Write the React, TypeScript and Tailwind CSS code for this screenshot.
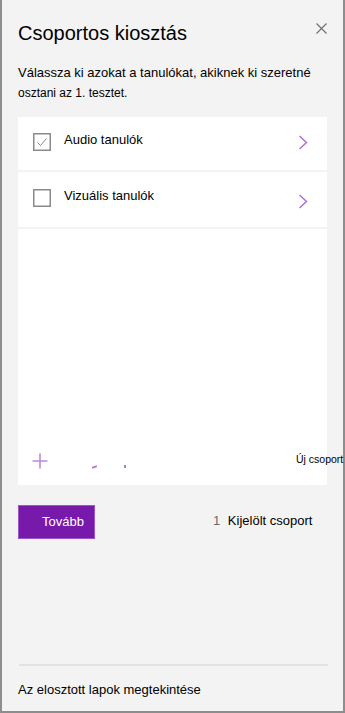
function Checkbox({ checked }: { checked?: boolean }) {
  return (
    <svg className="mt-[2px] shrink-0" width="18" height="18" viewBox="0 0 18 18" fill="none">
      <rect x="0.75" y="0.75" width="16.5" height="16.5" stroke="#8a8a8a" strokeWidth="1.5" />
      {checked && <polyline points="4.5,9.5 7.5,12.5 13.5,5.5" stroke="#8a8a8a" strokeWidth="1" />}
    </svg>
  );
}

function Chevron({ className }: { className: string }) {
  return (
    <svg className={className} width="10" height="15" viewBox="0 0 10 15" fill="none">
      <polyline points="1.5,1 8.5,7.5 1.5,14" stroke="#a96bd6" strokeWidth="1.4" />
    </svg>
  );
}

export default function App() {
  return (
    <div
      className="w-[345px] h-[713px] flex flex-col bg-[#f3f3f3] border-x-2 border-b-2 border-[#8d8d8d] text-black"
      style={{ fontFamily: '"Liberation Sans", Arial, sans-serif' }}
    >
      {/* Header */}
      <div className="flex items-start pl-[16px] pt-[19px]">
        <h1 className="text-[20px] leading-[28px] font-normal">Csoportos kiosztás</h1>
        <button className="ml-auto mr-[16px] mt-[4px]">
          <svg width="11" height="11" viewBox="0 0 11 11" fill="none">
            <path d="M0.5 0.5L10.5 10.5M10.5 0.5L0.5 10.5" stroke="#6e6e6e" strokeWidth="1.1" />
          </svg>
        </button>
      </div>

      {/* Description */}
      <div className="pl-[16px] mt-[16px]">
        <div className="text-[13px] leading-[20px]">Válassza ki azokat a tanulókat, akiknek ki szeretné</div>
        <div className="text-[12px] leading-[20px]">osztani az 1. tesztet.</div>
      </div>

      {/* Group list */}
      <div className="ml-[16px] mt-[14px] w-[309px] h-[368px] bg-white flex flex-col">
        <div className="flex items-start h-[55px] pl-[15px] pt-[14px] border-b-2 border-[#f3f3f3]">
          <Checkbox checked />
          <span className="ml-[13px] text-[13px] leading-[18px]">Audio tanulók</span>
          <Chevron className="ml-auto mr-[19px] mt-[4px]" />
        </div>
        <div className="flex items-start h-[57px] pl-[15px] pt-[15px] border-b-2 border-[#f3f3f3]">
          <Checkbox />
          <span className="ml-[13px] text-[13px] leading-[18px]">Vizuális tanulók</span>
          <Chevron className="ml-auto mr-[19px] mt-[7px]" />
        </div>
        <div className="flex-1" />
        <div className="relative flex items-start h-[40px] pl-[14px]">
          <svg className="mt-[8px] shrink-0" width="16" height="16" viewBox="0 0 16 16" fill="none">
            <path d="M8 0.5V15.5M0.5 8H15.5" stroke="#b98bd9" strokeWidth="1.6" />
          </svg>
          <span className="ml-[248px] mt-[6px] text-[10.5px] leading-[16px] whitespace-nowrap">Új csoport</span>
          <span className="absolute left-[74px] top-[21px] w-[5px] h-[2px] bg-[#b078d4] rotate-[-20deg]" />
          <span className="absolute left-[106px] top-[20px] w-[2px] h-[3px] bg-[#b078d4]" />
        </div>
      </div>

      {/* Actions */}
      <div className="flex items-start mt-[20px] pl-[16px]">
        <button className="w-[77px] h-[34px] bg-[#7719aa] border border-[#9b55c6] text-white text-left pl-[23px] pt-[7px] text-[13px] leading-[18px] flex items-start">
          Tovább
        </button>
        <div className="ml-[118px] mt-[7px] text-[13px] leading-[18px] whitespace-nowrap">
          <span className="text-[#6b6b6b]">1</span>
          <span className="ml-[4px]"> Kijelölt csoport</span>
        </div>
      </div>

      <div className="flex-1" />

      {/* Footer */}
      <div className="ml-[17px] w-[309px] h-[2px] bg-[#e2e2e2]" />
      <div className="pl-[16px] mt-[15px] pb-[12px] text-[13px] leading-[18px]">Az elosztott lapok megtekintése</div>
    </div>
  );
}
